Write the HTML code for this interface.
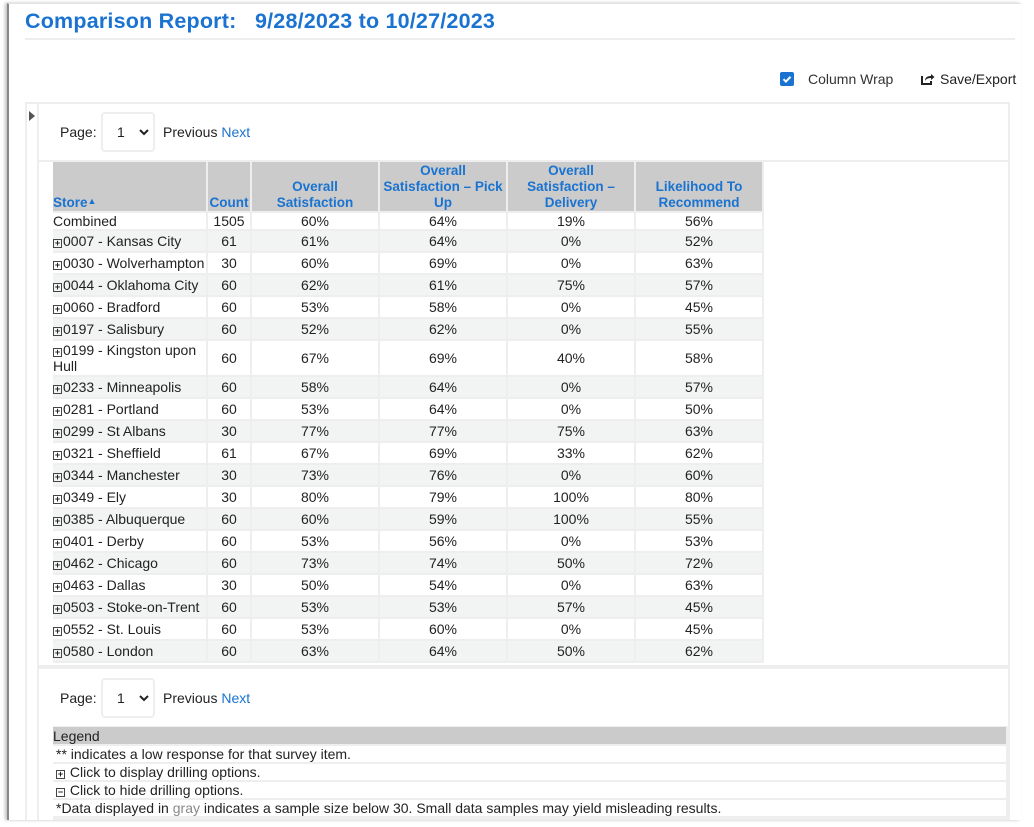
<!DOCTYPE html>
<html><head><meta charset="utf-8"><style>
*{box-sizing:border-box;margin:0;padding:0}
body{width:1034px;height:827px;background:#fff;font-family:"Liberation Sans",sans-serif;font-size:13px;color:#222;position:relative;overflow:hidden}
.abs{position:absolute}
.frame{left:7px;top:3px;width:1014px;height:817px;border-left:2px solid #888;border-top:1px solid #e4e4e4;box-shadow:-2px 0 3px rgba(0,0,0,.25)}
.title{left:25px;top:9px;font-size:21.5px;font-weight:bold;color:#1a73d0;letter-spacing:.2px}
.hr{left:25px;top:38px;width:990px;height:2px;background:#eee}
.cb{left:780px;top:72px;width:14px;height:14px;background:#1a73d0;border-radius:2px}
.blue{color:#1a73d0}
.sel{width:54px;height:40px;border:2px solid #eee;border-radius:4px}
table{position:absolute;left:53px;top:162px;border-collapse:collapse;table-layout:fixed}
td,th{border-right:2px solid #eee;border-bottom:2px solid #eee;padding:0;text-align:center;line-height:16px;font-size:14px}
th{background:#cbcbcb;color:#1a73d0;font-weight:bold;vertical-align:bottom;height:50px;font-size:13.5px}
td:first-child,th:first-child{text-align:left;white-space:nowrap}
tr.e td{background:#f2f3f3}
tr td{height:22px}
tr.c td{height:18px}
tr.k td{height:36px}
tr.k td:first-child{white-space:normal}
.p{display:inline-block;width:9px;height:9px;border:1px solid #444;font-size:9px;line-height:7px;text-align:center;vertical-align:0px;margin-right:1px;font-weight:bold}
.leg div{position:absolute;left:0;width:953px;height:16px;background:#fff;line-height:16px;padding-left:3px;font-size:14px}
</style></head><body>
<div class="abs frame"></div>
<div class="abs title">Comparison Report:&nbsp;&nbsp; 9/28/2023 to 10/27/2023</div>
<div class="abs hr"></div>
<div class="abs cb"><svg width="14" height="14"><path d="M3.5 7.2l2.4 2.4 4.6-4.8" stroke="#fff" stroke-width="2" fill="none"/></svg></div>
<div class="abs" style="left:808px;top:71px;font-size:14px;color:#333">Column Wrap</div>
<svg class="abs" style="left:920px;top:72px" width="15" height="14"><path d="M2 4v8h9v-3" stroke="#222" stroke-width="2" fill="none"/><path d="M5 9c0-4 3-5 6-5V2l3.5 3L11 8V6c-3 0-5 1-6 3z" fill="#222"/></svg>
<div class="abs" style="left:940px;top:71px;font-size:14px;color:#222">Save/Export</div>

<div class="abs" style="left:25px;top:102px;width:985px;height:718px;background:#eee"></div>
<div class="abs" style="left:27px;top:104px;width:10px;height:716px;background:#fff"></div>
<svg class="abs" style="left:28px;top:110px" width="8" height="12"><path d="M1 1l6 5-6 5z" fill="#555"/></svg>
<div class="abs" style="left:39px;top:104px;width:969px;height:56px;background:#fff"></div>
<div class="abs" style="left:39px;top:162px;width:969px;height:503px;background:#fff"></div>
<div class="abs" style="left:39px;top:669px;width:969px;height:57px;background:#fff"></div>
<div class="abs" style="left:39px;top:726px;width:14px;height:94px;background:#fff"></div>

<div class="abs" style="left:60px;top:124px;font-size:14px">Page:</div>
<div class="abs sel" style="left:101px;top:112px"><span class="abs" style="left:14px;top:10px;font-size:14px">1</span><svg class="abs" style="left:36px;top:15px" width="10" height="7"><path d="M1 1l4 4 4-4" stroke="#222" stroke-width="2" fill="none"/></svg></div>
<div class="abs" style="left:163px;top:124px;font-size:14px">Previous <span class="blue">Next</span></div>

<div class="abs" style="left:60px;top:690px;font-size:14px">Page:</div>
<div class="abs sel" style="left:101px;top:678px"><span class="abs" style="left:14px;top:10px;font-size:14px">1</span><svg class="abs" style="left:36px;top:15px" width="10" height="7"><path d="M1 1l4 4 4-4" stroke="#222" stroke-width="2" fill="none"/></svg></div>
<div class="abs" style="left:163px;top:690px;font-size:14px">Previous <span class="blue">Next</span></div>

<table>
<colgroup><col style="width:154px"><col style="width:44px"><col style="width:128px"><col style="width:128px"><col style="width:128px"><col style="width:128px"></colgroup>
<tr><th>Store<span style="font-size:9px;vertical-align:3px">&#9650;</span></th><th>Count</th><th>Overall<br>Satisfaction</th><th>Overall<br>Satisfaction – Pick<br>Up</th><th>Overall<br>Satisfaction –<br>Delivery</th><th>Likelihood To<br>Recommend</th></tr>
<tr class="c"><td>Combined</td><td>1505</td><td>60%</td><td>64%</td><td>19%</td><td>56%</td></tr>
<tr class="e"><td><span class="p">+</span>0007 - Kansas City</td><td>61</td><td>61%</td><td>64%</td><td>0%</td><td>52%</td></tr>
<tr><td><span class="p">+</span>0030 - Wolverhampton</td><td>30</td><td>60%</td><td>69%</td><td>0%</td><td>63%</td></tr>
<tr class="e"><td><span class="p">+</span>0044 - Oklahoma City</td><td>60</td><td>62%</td><td>61%</td><td>75%</td><td>57%</td></tr>
<tr><td><span class="p">+</span>0060 - Bradford</td><td>60</td><td>53%</td><td>58%</td><td>0%</td><td>45%</td></tr>
<tr class="e"><td><span class="p">+</span>0197 - Salisbury</td><td>60</td><td>52%</td><td>62%</td><td>0%</td><td>55%</td></tr>
<tr class="k"><td><span class="p">+</span>0199 - Kingston upon Hull</td><td>60</td><td>67%</td><td>69%</td><td>40%</td><td>58%</td></tr>
<tr class="e"><td><span class="p">+</span>0233 - Minneapolis</td><td>60</td><td>58%</td><td>64%</td><td>0%</td><td>57%</td></tr>
<tr><td><span class="p">+</span>0281 - Portland</td><td>60</td><td>53%</td><td>64%</td><td>0%</td><td>50%</td></tr>
<tr class="e"><td><span class="p">+</span>0299 - St Albans</td><td>30</td><td>77%</td><td>77%</td><td>75%</td><td>63%</td></tr>
<tr><td><span class="p">+</span>0321 - Sheffield</td><td>61</td><td>67%</td><td>69%</td><td>33%</td><td>62%</td></tr>
<tr class="e"><td><span class="p">+</span>0344 - Manchester</td><td>30</td><td>73%</td><td>76%</td><td>0%</td><td>60%</td></tr>
<tr><td><span class="p">+</span>0349 - Ely</td><td>30</td><td>80%</td><td>79%</td><td>100%</td><td>80%</td></tr>
<tr class="e"><td><span class="p">+</span>0385 - Albuquerque</td><td>60</td><td>60%</td><td>59%</td><td>100%</td><td>55%</td></tr>
<tr><td><span class="p">+</span>0401 - Derby</td><td>60</td><td>53%</td><td>56%</td><td>0%</td><td>53%</td></tr>
<tr class="e"><td><span class="p">+</span>0462 - Chicago</td><td>60</td><td>73%</td><td>74%</td><td>50%</td><td>72%</td></tr>
<tr><td><span class="p">+</span>0463 - Dallas</td><td>30</td><td>50%</td><td>54%</td><td>0%</td><td>63%</td></tr>
<tr class="e"><td><span class="p">+</span>0503 - Stoke-on-Trent</td><td>60</td><td>53%</td><td>53%</td><td>57%</td><td>45%</td></tr>
<tr><td><span class="p">+</span>0552 - St. Louis</td><td>60</td><td>53%</td><td>60%</td><td>0%</td><td>45%</td></tr>
<tr class="e"><td><span class="p">+</span>0580 - London</td><td>60</td><td>63%</td><td>64%</td><td>50%</td><td>62%</td></tr>
</table>

<div class="abs leg" style="left:53px;top:727px;width:953px;height:93px">
<div style="top:0;height:17px;background:#cbcbcb;padding-left:0;line-height:18px">Legend</div>
<div style="top:19px">** indicates a low response for that survey item.</div>
<div style="top:37px"><span class="p">+</span> Click to display drilling options.</div>
<div style="top:55px"><span class="p">−</span> Click to hide drilling options.</div>
<div style="top:73px">*Data displayed in <span style="color:#888">gray</span> indicates a sample size below 30. Small data samples may yield misleading results.</div>
</div>
</body></html>
